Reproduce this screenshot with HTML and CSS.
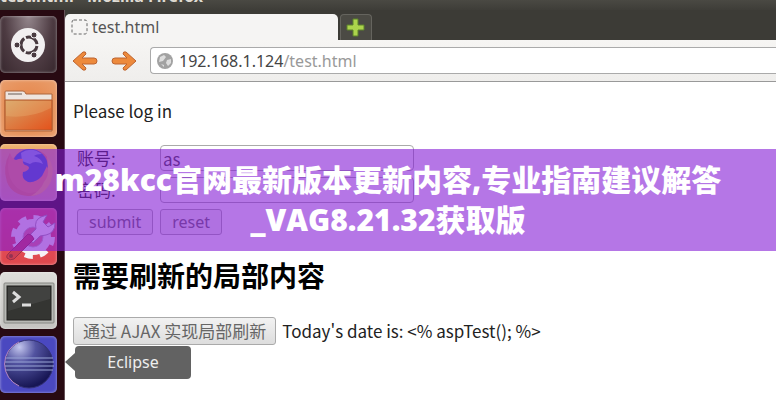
FILE: index.html
```
<!DOCTYPE html>
<html lang="zh-CN">
<head>
    <meta charset="UTF-8">
    <title>test.html</title>
    <link rel="stylesheet" href="styles.css">
</head>
<body>
    <!-- 窗口标题 -->
    <header class="titlebar"><span>test.html - Mozilla Firefox</span></header>

    <div class="desktop">
        <!-- 左侧启动栏 -->
        <nav class="launcher" aria-label="Launcher">
            <button class="tile dash" aria-label="Dash">
                <svg viewBox="0 0 57 57">
                    <circle cx="28" cy="29" r="17" fill="#f2f0f1"/>
                    <circle cx="29" cy="29" r="8" fill="none" stroke="#493b41" stroke-width="3" stroke-dasharray="14.7 2" stroke-dashoffset="-1"/>
                    <g fill="#493b41" stroke="#f2f0f1" stroke-width="1">
                        <circle cx="17" cy="29" r="3"/>
                        <circle cx="34" cy="19" r="3"/>
                        <circle cx="34" cy="39" r="3"/>
                    </g>
                </svg>
            </button>
            <button class="tile files" aria-label="Files">
                <svg viewBox="0 0 57 57">
                    <defs>
                        <linearGradient id="folder" x1="0" y1="0" x2="1" y2="1">
                            <stop offset="0" stop-color="#d6a367"/>
                            <stop offset="1" stop-color="#e4521b"/>
                        </linearGradient>
                    </defs>
                    <path d="M5 51V12q0-1 1-1h17q2 0 3 3h26v37z" fill="#eee5df" stroke="#ad663c"/>
                    <path d="M8 14h14" stroke="#aaa09a" stroke-width="2"/>
                    <path d="M5 20h47v30H5z" fill="url(#folder)" stroke="#b45a2d"/>
                    <path d="M6 36q24 3 45-8V21H6z" fill="#f0c987" opacity=".25"/>
                </svg>
            </button>
            <button class="tile firefox" aria-label="Firefox">
                <svg viewBox="0 0 57 57">
                    <path d="M10 9q0 5 2 7 7-11 19-11 12 1 17 9 6 9 3 20-5 18-23 18Q12 51 7 38 2 22 10 9z" fill="#e58a5c"/>
                    <circle cx="30" cy="23" r="18" fill="#3465c8"/>
                    <path d="M21 9q10-7 21 1-6 0-8 2 7 2 9 8-8-4-13 0l-8-3z" fill="#7fa9ec"/>
                    <path d="M10 9q2 6 6 7 4-2 7-1-1 4 2 6 4 1 4 3-1 3-6 4-2 7 5 10 8 1 14-6l5-10q4 8 1 15-6 13-20 12Q15 46 10 34 6 22 10 9z" fill="#ee9468"/>
                    <path d="M47 12q9 11 4 25-6 14-20 15 10-6 13-14 5-6 4-14z" fill="#f4b76a"/>
                </svg>
            </button>
            <button class="tile settings" aria-label="System Settings">
                <svg viewBox="0 0 57 57">
                    <circle cx="33" cy="29" r="19" fill="none" stroke="#f6f2f6" stroke-width="6" stroke-dasharray="8 6.9"/>
                    <circle cx="33" cy="29" r="14" fill="none" stroke="#f6f2f6" stroke-width="8"/>
                    <circle cx="33" cy="29" r="10" fill="#e0788a" stroke="#c5bcc6"/>
                    <path d="M28 29l8-8q-2-9 5-12l6-2-4 7 5 5 7-4q0 10-9 12l-6 1-7 7z" fill="#fff" stroke="#a69aa8"/>
                    <path d="M8 46l20-20q4 0 6 5L14 51q-4 2-7-1-1-2 1-4z" fill="#cd3d54" stroke="#9c3048"/>
                    <circle cx="11" cy="48" r="2" fill="#923252"/>
                </svg>
            </button>
            <button class="tile terminal" aria-label="Terminal">
                <svg viewBox="0 0 57 57">
                    <rect x="4" y="11" width="50" height="40" rx="1" fill="#b8b9b5" stroke="#868783"/>
                    <rect x="7" y="14" width="44" height="34" fill="#343532" stroke="#20211f"/>
                    <path d="M8 15h42v12L8 39z" fill="#777" opacity=".2"/>
                    <path d="M13 20l6 5-6 5M22 33h9" fill="none" stroke="#ddd" stroke-width="3"/>
                </svg>
            </button>
            <button class="tile eclipse" aria-label="Eclipse">
                <svg viewBox="0 0 57 57">
                    <defs>
                        <radialGradient id="globe" cx=".3" cy=".15" r=".85">
                            <stop offset="0" stop-color="#c3c6ee"/>
                            <stop offset=".4" stop-color="#5253a0"/>
                            <stop offset="1" stop-color="#171654"/>
                        </radialGradient>
                    </defs>
                    <circle cx="29" cy="28" r="24" fill="url(#globe)" stroke="#353375"/>
                    <path d="M19 6a24 24 0 0 0 0 44" fill="none" stroke="#b989c5"/>
                    <path d="M6 22h47M5 26h49M5 30h49M6 34h47" stroke="#9aa6d6"/>
                </svg>
            </button>
            <button class="tile workspace" aria-label="Workspace"></button>
        </nav>

        <main class="browser">
            <div class="tabs">
                <a class="tab" href="#page">
                    <svg width="18" height="18" viewBox="0 0 18 18"><rect x="1" y="2" width="15" height="14" rx="2" fill="none" stroke="#666" stroke-dasharray="3 2"/></svg>
                    test.html
                </a>
                <button class="new-tab" aria-label="New tab">
                    <svg width="20" height="20" viewBox="0 0 20 20"><path d="M7 1h5v6h6v5h-6v6H7v-6H1V7h6z" fill="#add44c" stroke="#5d822b"/></svg>
                </button>
            </div>
            <div class="toolbar">
                <button class="arrow" aria-label="Back">
                    <svg width="26" height="22" viewBox="0 0 26 22"><path d="M1 11l10-9q3-1 3 2l-4 4h12q3 0 3 3t-3 3H10l4 4q0 3-3 2z" fill="#ed8a3c" stroke="#bd6430"/></svg>
                </button>
                <button class="arrow" aria-label="Forward">
                    <svg width="26" height="22" viewBox="0 0 26 22"><path d="M25 11L15 2q-3-1-3 2l4 4H4q-3 0-3 3t3 3h12l-4 4q0 3 3 2z" fill="#ed8a3c" stroke="#bd6430"/></svg>
                </button>
                <a class="address" href="#page">
                    <svg width="18" height="18" viewBox="0 0 18 18"><circle cx="9" cy="9" r="8" fill="#a2a2a2"/><path d="M4 5l4-2 2 2-3 4-4 1zM11 8l4-1v4l-3 3-2-3zM5 12l3 1v2z" fill="#ddd"/></svg>
                    <span>192.168.1.124<span class="path">/test.html</span></span>
                </a>
            </div>

            <div class="page" id="page">
                <p class="intro">Please log in</p>
                <form>
                    <div class="field">
                        <label for="account">账号:</label>
                        <input id="account" type="text" value="as">
                    </div>
                    <div class="field">
                        <label for="password">密码:</label>
                        <input id="password" type="password">
                    </div>
                    <div class="actions">
                        <button type="button">submit</button>
                        <button type="button">reset</button>
                    </div>
                </form>
                <h2>需要刷新的局部内容</h2>
                <div class="refresh">
                    <button type="button">通过 AJAX 实现局部刷新</button>
                    <span>Today's date is: &lt;% aspTest(); %&gt;</span>
                </div>
            </div>
        </main>
    </div>

    <div class="tooltip" role="tooltip">Eclipse</div>
    <div class="banner">m28kcc官网最新版本更新内容,专业指南建议解答<br>_VAG8.21.32获取版</div>
</body>
</html>
```
FILE: styles.css
```
*{
    box-sizing: border-box;
}
body{
    margin: 0;
    height: 100vh;
    display: flex;
    flex-direction: column;
    position: relative;
    overflow: hidden;
    background: #fff;
    font: 17px/24px "Noto Sans CJK SC", sans-serif;
    color: #222;
}
button, input{
    font: inherit;
}
button{
    padding: 0;
}
a{
    color: inherit;
    text-decoration: none;
}
svg{
    display: block;
    flex: none;
}

/* 窗口标题 */
.titlebar{
    display: flex;
    align-items: flex-end;
    height: 10px;
    flex: none;
    overflow: hidden;
    background: linear-gradient(#4a4943, #3e3d38);
    color: #dfdbd2;
    font: bold 16px/28px "Noto Sans", sans-serif;
}

.desktop{
    display: flex;
    flex: 1;
    min-height: 0;
}

/* 启动栏 */
.launcher{
    display: flex;
    flex-direction: column;
    gap: 7px;
    width: 65px;
    flex: none;
    padding-top: 6px;
    overflow: hidden;
    background: #280a12;
    border-right: 1px solid #655158;
}
.tile{
    width: 57px;
    height: 57px;
    flex: none;
    border: 0;
    border-radius: 5px;
    overflow: hidden;
    box-shadow: inset 0 0 3px #ffffff88;
}
.dash{
    background: radial-gradient(ellipse at 50% 0, #94868c, #4d3b42 60%, #36262c);
}
.files{
    background: radial-gradient(#e58042, #e99f6e);
}
.firefox{
    background: linear-gradient(#eeb06c, #d9a0a0);
}
.settings{
    background: linear-gradient(#e0506c, #e0484c);
}
.terminal{
    background: linear-gradient(#deddda, #c4c3c0);
}
.eclipse{
    background: #4a48c0;
}
.workspace{
    background: #bbb7b5;
}

/* 浏览器 */
.browser{
    display: flex;
    flex-direction: column;
    flex: 1;
    min-width: 0;
}
.tabs{
    display: flex;
    align-items: flex-end;
    gap: 2px;
    height: 30px;
    flex: none;
    padding-top: 4px;
    background: #3c3b36;
    font: 16px/24px "Noto Sans", sans-serif;
}
.tab{
    display: flex;
    align-items: center;
    gap: 3px;
    width: 273px;
    height: 26px;
    padding-left: 6px;
    border-radius: 5px 5px 0 0;
    background: #f5f4f3;
    color: #555;
}
.new-tab{
    display: flex;
    align-items: center;
    justify-content: center;
    width: 32px;
    height: 26px;
    border: 1px solid #65645e;
    border-bottom: 0;
    border-radius: 4px 4px 0 0;
    background: #4b4a44;
}
.toolbar{
    display: flex;
    align-items: center;
    height: 42px;
    flex: none;
    padding-left: 7px;
    gap: 13px;
    background: linear-gradient(#f6f5f3, #efeeec);
    border-bottom: 1px solid #999;
}
.arrow{
    border: 0;
    background: none;
}
.address{
    display: flex;
    align-items: center;
    flex: 1;
    gap: 5px;
    height: 27px;
    padding-left: 5px;
    border: 1px solid #aaa;
    border-right: 0;
    border-radius: 4px 0 0 4px;
    background: #fff;
    color: #444;
    font: 16px/24px "Noto Sans", sans-serif;
}
.path{
    color: #999;
}

/* 页面内容 */
.page{
    flex: 1;
    padding: 17px 8px 0;
}
.intro{
    margin: 0 0 22px;
}
.field{
    display: flex;
    align-items: center;
    margin-bottom: 6px;
}
.field label{
    width: 87px;
    padding-left: 4px;
}
.field input{
    width: 254px;
    height: 26px;
    padding: 0 2px;
    border: 1px solid #aaa;
    border-radius: 4px;
    background: #fff;
    color: #444;
}
.actions{
    display: flex;
    gap: 7px;
    padding-left: 4px;
    font: 16px/24px "Noto Sans", sans-serif;
}
.actions button, .refresh button{
    border: 1px solid #aaa;
    border-radius: 3px;
    background: linear-gradient(#f2f2f2, #ddd);
    color: #666;
}
.actions button{
    height: 26px;
    padding: 0 11px;
    background: #f2f2f2;
}
h2{
    margin: 22px 0 24px;
    font: bold 28px/36px "Noto Sans CJK SC", sans-serif;
    color: #000;
}
.refresh{
    display: flex;
    align-items: center;
    gap: 6px;
}
.refresh button{
    height: 28px;
    padding: 0 9px;
}

/* 启动栏提示 */
.tooltip{
    position: absolute;
    left: 75px;
    top: 346px;
    width: 116px;
    height: 33px;
    border-radius: 4px;
    background: #626262;
    color: #eee;
    font: 16px/33px "Noto Sans", sans-serif;
    text-align: center;
}
.tooltip::before{
    content: "";
    position: absolute;
    left: -10px;
    top: 7px;
    border: 9px solid transparent;
    border-left: 0;
    border-right: 10px solid #626262;
}

/* 横幅 */
.banner{
    position: absolute;
    top: 149px;
    left: 0;
    right: 0;
    padding: 11px 0;
    background: rgba(131, 27, 213, .6);
    color: #fff;
    font: 800 30px/40px "Open Sans", "Noto Sans CJK SC", sans-serif;
    text-align: center;
}
```
